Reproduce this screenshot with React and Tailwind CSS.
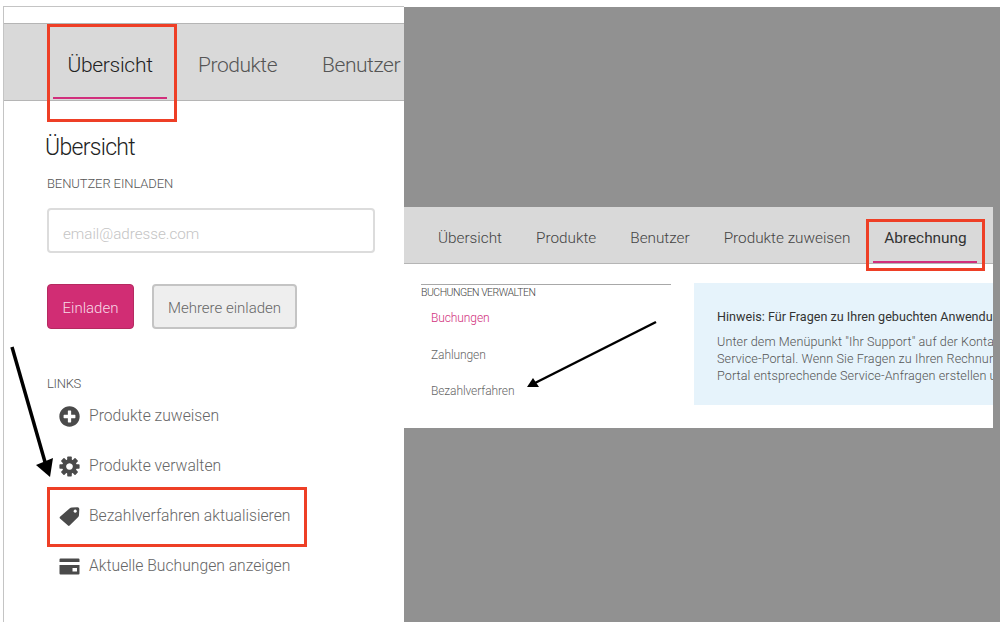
import React from "react";
import { FaPlusCircle } from "react-icons/fa";

const font = "font-['Roboto','Liberation_Sans',sans-serif]";

const GearIcon = () => (
  <svg viewBox="0 0 21 21" className="w-[21px] h-[21px] text-[#4a4a4a]">
    {[0, 45, 90, 135, 180, 225, 270, 315].map((angle) => (
      <rect key={angle} x="8.2" y="0.4" width="4.6" height="5" rx="0.8" fill="currentColor" transform={`rotate(${angle} 10.5 10.5)`} />
    ))}
    <path
      fill="currentColor"
      fillRule="evenodd"
      d="M10.5 3.2 a7.3 7.3 0 1 0 0.01 0 Z M10.5 7.2 a3.3 3.3 0 1 1 -0.01 0 Z"
    />
  </svg>
);

const TagIcon = () => (
  <svg viewBox="0 0 21 21" className="w-[21px] h-[21px] text-[#4a4a4a]">
    <path
      fill="currentColor"
      fillRule="evenodd"
      d="M10.5 2.5 Q11.5 1.5 13 1.5 L18.5 1.2 Q20.3 1.2 20.3 3 L20 9 Q20 10.3 19 11.2 L10.6 19.6 Q9.8 20.3 9 19.6 L1 12.4 Q0.2 11.6 1 10.8 Z M16.2 3.6 a1.6 1.6 0 1 0 0.01 0 Z"
    />
  </svg>
);

const CardIcon = () => (
  <svg viewBox="0 0 21 17" className="w-[21px] h-[17px] text-[#4a4a4a]">
    <path
      fill="currentColor"
      fillRule="evenodd"
      d="M1.5 0.5 H19.5 Q20.5 0.5 20.5 1.5 V15.5 Q20.5 16.5 19.5 16.5 H1.5 Q0.5 16.5 0.5 15.5 V1.5 Q0.5 0.5 1.5 0.5 Z M0.5 4 V7 H20.5 V4 Z M13.5 10 V13.5 H18 V10 Z"
    />
  </svg>
);

const links = [
  { label: "Produkte zuweisen", icon: <FaPlusCircle className="w-[21px] h-[21px] text-[#4a4a4a]" /> },
  { label: "Produkte verwalten", icon: <GearIcon /> },
  { label: "Bezahlverfahren aktualisieren", icon: <TagIcon /> },
  { label: "Aktuelle Buchungen anzeigen", icon: <CardIcon /> },
];

const LeftPanel = () => (
  <div className="w-[401px] shrink-0 h-[616px] border-l border-t border-[#c4c4c4] bg-white overflow-hidden">
    <div className="mt-4 h-[78px] flex items-start bg-[#d9d9d9] border-y border-[#b5b5b5] pl-[49px] whitespace-nowrap">
      <div className="w-[114px] shrink-0 h-[75px] border-b-2 border-[#d12f7c] pt-[23px] text-center text-[21px] leading-[36px] font-light text-[#222222] tracking-[-0.3px]">
        Übersicht
      </div>
      <div className="ml-[31px] shrink-0 pt-[23px] text-[21px] leading-[36px] font-light text-[#555555] tracking-[-0.45px]">
        Produkte
      </div>
      <div className="ml-[45px] shrink-0 pt-[23px] text-[21px] leading-[36px] font-light text-[#555555] tracking-[-0.45px]">
        Benutzer
      </div>
    </div>

    <div className="pl-[43px]">
      <h1 className="-ml-[2px] mt-[30px] text-[23px] leading-[34px] font-light text-[#222222] tracking-[-0.7px]">
        Übersicht
      </h1>
      <div className="mt-[9px] text-[13px] leading-[20px] font-light text-[#555555] tracking-[-0.1px]">
        BENUTZER EINLADEN
      </div>
      <div className="mt-[14px] w-[328px] h-[45px] border-2 border-[#dcdcdc] rounded-[4px] flex items-center pl-[14px] pt-[8px] text-[15.2px] font-light text-[#c4c4c4]">
        email@adresse.com
      </div>
      <div className="mt-[31px] flex gap-[18px]">
        <button className="w-[87px] h-[45px] rounded-[4px] pt-[4px] bg-[#d12d74] border border-[#b52a60] text-[15px] font-light text-[#f8d9e6]">
          Einladen
        </button>
        <button className="w-[145px] h-[45px] rounded-[4px] pt-[4px] bg-[#eeeeee] border-2 border-[#c4c4c4] text-[15px] font-light text-[#666666]">
          Mehrere einladen
        </button>
      </div>
      <div className="mt-[45px] text-[13px] leading-[20px] font-light text-[#555555] tracking-[-0.3px]">LINKS</div>
      <div className="-mt-[3px] flex flex-col">
        {links.map((link) => (
          <div key={link.label} className="h-[50px] flex items-center">
            <div className="w-[21px] flex justify-center ml-[12px]">{link.icon}</div>
            <span className="ml-[9px] text-[15.7px] font-light text-[#666666] whitespace-nowrap">
              {link.label}
            </span>
          </div>
        ))}
      </div>
    </div>
  </div>
);

const tabs = ["Übersicht", "Produkte", "Benutzer", "Produkte zuweisen"];

const RightWindow = () => (
  <div className="w-[589px] h-[221px] bg-white overflow-hidden">
    <div className="h-[57px] flex items-start bg-[#d9d9d9] border-b border-[#b5b5b5] pl-[34px] whitespace-nowrap">
      {tabs.map((tab) => (
        <div key={tab} className="mr-[34px] shrink-0 pt-[20px] text-[15.3px] leading-[22px] font-light text-[#444444]">
          {tab}
        </div>
      ))}
      <div className="-ml-[11px] w-[104px] shrink-0 h-[56px] border-b-2 border-[#d12f7c] pt-[20px] text-center text-[15.4px] leading-[22px] text-[#333333]">
        Abrechnung
      </div>
    </div>
    <div className="flex pl-[17px] pt-[19px]">
      <div className="w-[250px] shrink-0">
        <div className="mt-[1px] border-t border-[#a8a8a8] text-[10.5px] leading-[15px] font-light text-[#444444] tracking-[-0.5px]">
          BUCHUNGEN VERWALTEN
        </div>
        <div className="pl-[10px] pt-[10px] flex flex-col gap-[20px] text-[12px] leading-[17px] font-light text-[#666666] tracking-[-0.1px]">
          <span className="text-[#d12f7c]">Buchungen</span>
          <span>Zahlungen</span>
          <span className="-mt-[1px]">Bezahlverfahren</span>
        </div>
      </div>
      <div className="ml-[23px] flex-1 h-[122px] bg-[#e6f3fb] pl-[23px] pt-[25px] whitespace-nowrap overflow-hidden">
        <div className="text-[12.6px] leading-[18px] text-[#333333]">
          Hinweis: Für Fragen zu Ihren gebuchten Anwendungen
        </div>
        <div className="mt-[7px] text-[12.6px] leading-[17px] font-light text-[#555555] tracking-[0.1px]">
          <div>Unter dem Menüpunkt "Ihr Support" auf der Kontaktseite</div>
          <div>Service-Portal. Wenn Sie Fragen zu Ihren Rechnungen haben</div>
          <div>Portal entsprechende Service-Anfragen erstellen und</div>
        </div>
      </div>
    </div>
  </div>
);

export default function App() {
  return (
    <div className={`relative w-[1000px] h-[622px] overflow-hidden bg-white ${font}`}>
      <div className="pt-[6px] pl-[3px] flex">
        <LeftPanel />
        <div className="mt-[1px] flex-1 h-[615px] bg-[#919191] pt-[200px]">
          <RightWindow />
        </div>
      </div>

      {/* annotations drawn on top of the screenshot */}
      <div className="absolute left-[47px] top-[24px] w-[130px] h-[98px] border-[3px] border-[#ee3f26]" />
      <div className="absolute left-[47px] top-[487px] w-[260px] h-[60px] border-[3px] border-[#ee3f26]" />
      <div className="absolute left-[866px] top-[219px] w-[119px] h-[52px] border-[3px] border-[#ee3f26]" />
      <svg className="absolute left-0 top-0 w-[1000px] h-[622px] pointer-events-none" viewBox="0 0 1000 622">
        <line x1="12" y1="347" x2="45" y2="462" stroke="#000000" strokeWidth="3.5" />
        <polygon points="50,477 36,465 53,458" fill="#000000" />
        <line x1="656" y1="322" x2="535" y2="383" stroke="#000000" strokeWidth="2.5" />
        <polygon points="527,387 533,378 539,387" fill="#000000" />
      </svg>
    </div>
  );
}
